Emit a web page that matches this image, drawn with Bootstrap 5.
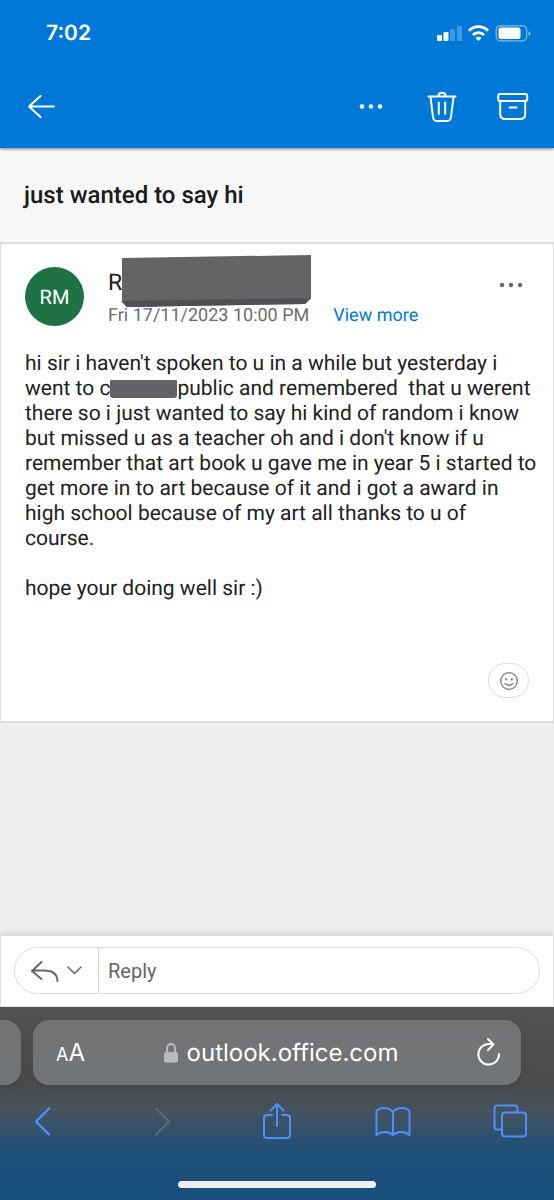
<!DOCTYPE html>
<html lang="en">
<head>
<meta charset="utf-8">
<meta name="viewport" content="width=device-width, initial-scale=1">
<title>just wanted to say hi</title>
<link href="https://cdn.jsdelivr.net/npm/bootstrap@5.3.0/dist/css/bootstrap.min.css" rel="stylesheet">
<style>
  body { font-family: Roboto, "Liberation Sans", sans-serif; color: #212121; background: #efefef; text-rendering: geometricPrecision; }
  svg { display: block; fill: none; stroke: currentColor; stroke-width: 2; stroke-linecap: round; stroke-linejoin: round; overflow: visible; }
  .icon-btn { background: none; border: 0; padding: 0; color: inherit; }
  .ios-text { font-family: Inter, "Liberation Sans", sans-serif; }

  .app-header { background: #0078d7; color: #fff; box-shadow: 0 1px 3px rgba(0,0,0,.5); z-index: 1; }
  .status-row { height: 64px; padding: 4px 24px 0 46px; }
  .clock { font-size: 21px; font-weight: 600; }
  .tool-row { height: 84px; padding: 0 25px; }
  .tool-group { gap: 39px; }

  .subject-row { background: #f7f7f7; padding: 32px 24px; }
  .subject-row h1 { font-size: 24px; line-height: 30px; font-weight: 500; color: #1b1b1b; }

  .message { border: 1px solid #dedede; border-top-width: 2px; border-bottom-width: 2px; padding: 23px 14px 23px 24px; }
  .avatar { width: 59px; height: 59px; background: #1f7244; color: #fff; font-size: 20px; }
  .sender { font-size: 23px; line-height: 31px; }
  .sent-at { font-size: 18px; line-height: 36px; color: #6b6b6b; }
  .sent-at a { color: #0078d4; }
  .name-cover { position: absolute; left: 13px; top: -13px; }
  .message-body { font-size: 21px; line-height: 25px; margin-top: 18px; white-space: pre-wrap; }
  .word-cover { display: inline-block; width: 67px; height: 18px; background: #626366; border-radius: 1px 1px 3px 3px; vertical-align: -3px; }
  .react { width: 41px; height: 35px; border: 1px solid #dadada; border-radius: 18px; color: #777; margin: 61px 10px 0 auto; }

  .reply-bar { background: #fff; border: 1px solid #dedede; border-top: 0; padding: 11px 13px 12px; box-shadow: 0 -2px 8px rgba(0,0,0,.13); }
  .reply-pill { height: 47px; border: 1px solid #dcdcdc; border-radius: 24px; color: #666; }
  .reply-kind { width: 84px; border-right: 1px solid #d4d4d4; padding: 0 16px; }
  .reply-pill input { font-size: 20px; background: none; border: 0; outline: 0; padding: 0 9px; color: #666; }
  .reply-pill input::placeholder { color: #666; opacity: 1; }

  .browser-bar { background: linear-gradient(#535353 0, #4b4b4c 78px, #46535e 104px, #1f5078 145px, #174e7c 193px); padding-top: 13px; }
  .tab-row { gap: 12px; padding-right: 33px; }
  .tab-edge, .address { height: 65px; background: linear-gradient(#737373, #717579); box-shadow: 0 2px 8px rgba(0,0,0,.12); }
  .tab-edge { width: 21px; border-radius: 0 16px 16px 0; }
  .address { border-radius: 16px; padding: 0 19px 0 23px; color: #fff; }
  .text-size { font-size: 24px; }
  .text-size small { font-size: 18px; }
  .host { font-size: 24px; }
  .nav-row { height: 72px; padding: 0 26px 0 24px; color: #4a90ff; }
  .nav-row .dimmed { color: #5d6b78; }
  .home-line { width: 198px; height: 7px; border-radius: 4px; background: #eee; margin: 24px auto 12px; }
</style>
</head>
<body>
<div class="d-flex flex-column min-vh-100">
  <header class="app-header position-relative">
    <div class="status-row d-flex align-items-center justify-content-between">
      <span class="clock ios-text">7:02</span>
      <svg width="94" height="18" viewBox="0 0 94 18" aria-hidden="true">
        <g fill="#fff" stroke="none">
          <rect x="1" y="10" width="5" height="6" rx="1"/><rect x="7.500" y="7" width="5" height="9" rx="1"/>
          <rect x="14" y="4" width="5" height="12" rx="1" opacity=".25"/><rect x="21" y="1" width="5" height="15" rx="1" opacity=".25"/>
          <rect x="62.500" y="2.500" width="22" height="11.500" rx="2.500"/>
          <path d="M92.500 6v5q2-1 2-2.500T92.500 6z" opacity=".5"/>
          <path d="M42.500 11.800q2.400 0 2.900 1.300L42.500 16l-2.900-2.900q.5-1.300 2.900-1.300z"/>
        </g>
        <path d="M33 5.800C38 .3 47 .3 52 5.800M37 9.900c3-3 8-3 11 0" stroke-width="2.800" stroke-linecap="butt"/>
        <rect x="60.200" y=".8" width="30.500" height="15" rx="4" stroke-width="1.200" opacity=".5"/>
      </svg>
    </div>
    <nav class="tool-row d-flex align-items-center justify-content-between" aria-label="Message actions">
      <button class="icon-btn" aria-label="Back"><svg width="32" height="32" viewBox="0 0 32 32"><path d="M29 16.500H4M15.500 6L4 16.500 15.500 27"/></svg></button>
      <div class="tool-group d-flex">
        <button class="icon-btn" aria-label="More"><svg width="32" height="32" viewBox="0 0 32 32"><g fill="currentColor" stroke="none"><circle cx="7" cy="16.500" r="2.300"/><circle cx="16" cy="16.500" r="2.300"/><circle cx="25" cy="16.500" r="2.300"/></g></svg></button>
        <button class="icon-btn" aria-label="Delete"><svg width="32" height="32" viewBox="0 0 32 32"><path d="M2.500 6.500h27M12.500 6c0-4.500 7-4.500 7 0M4.500 7l2.500 20q.5 4 4 4h10q3.500 0 4-4L27.500 7M12.800 12.500V24M19.200 12.500V24"/></svg></button>
        <button class="icon-btn" aria-label="Archive"><svg width="32" height="32" viewBox="0 0 32 32"><rect x="1.200" y="4" width="29" height="7" rx="2"/><path d="M3.200 11v13q0 5 5 5h15q5 0 5-5V11M12.500 17.500h7"/></svg></button>
      </div>
    </nav>
  </header>

  <section class="subject-row"><h1 class="m-0">just wanted to say hi</h1></section>

  <article class="message bg-white">
    <div class="d-flex align-items-start">
      <span class="avatar rounded-circle d-flex align-items-center justify-content-center flex-shrink-0">RM</span>
      <div class="ms-4 flex-grow-1 position-relative">
        <div class="sender">R</div>
        <div class="sent-at d-flex"><time class="me-4">Fri 17/11/2023 10:00 PM</time><a href="#" class="text-decoration-none">View more</a></div>
        <svg class="name-cover" width="192" height="54" viewBox="0 0 192 54" aria-hidden="true"><path d="M1 4L190 1v43l-6 6L6 53l-5-5z" fill="#646467" stroke="none"/><path d="M1 47l189-3-6 6L6 53z" fill="#505054" stroke="none"/><path d="M1 47.500l5 5 30-.5" stroke="#4d5080" stroke-width="1"/></svg>
      </div>
      <button class="icon-btn me-2" aria-label="More options"><svg width="32" height="36" viewBox="0 0 32 36"><g fill="#666" stroke="none"><circle cx="3" cy="18" r="2.200"/><circle cx="12" cy="18" r="2.200"/><circle cx="21" cy="18" r="2.200"/></g></svg></button>
    </div>
    <p class="message-body mb-0">hi sir i haven't spoken to u in a while but yesterday i went to c<span class="word-cover"></span>public and remembered  that u werent there so i just wanted to say hi kind of random i know but missed u as a teacher oh and i don't know if u remember that art book u gave me in year 5 i started to get more in to art because of it and i got a award in high school because of my art all thanks to u of course.

hope your doing well sir :)</p>
    <button class="icon-btn react d-flex align-items-center justify-content-center" aria-label="React"><svg width="18" height="18" viewBox="0 0 18 18"><circle cx="9" cy="9" r="8.300" stroke-width="1.300"/><path d="M5 11.500q4 3.500 8 0" stroke-width="1.300"/><g fill="currentColor" stroke="none"><circle cx="6.200" cy="7.300" r="1.100"/><circle cx="11.800" cy="7.300" r="1.100"/></g></svg></button>
  </article>

  <div class="flex-grow-1"></div>

  <form class="reply-bar">
    <div class="reply-pill d-flex">
      <button type="button" class="icon-btn reply-kind d-flex align-items-center gap-2 flex-shrink-0" aria-label="Reply type">
        <svg width="28" height="22" viewBox="0 0 28 22"><path d="M10.500 2L1 11l9.500 8M1 10.500h12q13 0 13.500 10.500"/></svg>
        <svg width="15" height="9" viewBox="0 0 15 9"><path d="M1 1l6.500 6.500L14 1" stroke-width="1.500"/></svg>
      </button>
      <input class="flex-grow-1 w-100" type="text" placeholder="Reply" aria-label="Reply">
    </div>
  </form>

  <footer class="browser-bar ios-text">
    <div class="tab-row d-flex">
      <div class="tab-edge flex-shrink-0"></div>
      <div class="address d-flex align-items-center justify-content-between flex-grow-1">
        <button class="icon-btn text-size" aria-label="Text size"><small>A</small>A</button>
        <span class="host d-flex align-items-center gap-2"><svg width="16" height="20" viewBox="0 0 16 20" aria-hidden="true"><g color="#b9b9c0"><rect x="1" y="9" width="14" height="10.500" rx="2" fill="currentColor" stroke="none"/><path d="M4 9V5.500C4-.5 12-.5 12 5.500V9" stroke="currentColor"/></g></svg>outlook.office.com</span>
        <button class="icon-btn" aria-label="Reload"><svg width="26" height="30" viewBox="0 0 26 30"><path d="M23 16A10.300 10.300 0 1 1 12.700 6H17M12 1l5.500 5.500L12 12"/></svg></button>
      </div>
    </div>
    <nav class="nav-row d-flex align-items-center justify-content-between" aria-label="Browser">
      <button class="icon-btn" aria-label="Previous page"><svg width="36" height="36" viewBox="0 0 36 36"><path d="M25 5.500L12 18.500l13 13" stroke-width="2.400"/></svg></button>
      <button class="icon-btn dimmed" aria-label="Next page" disabled><svg width="36" height="36" viewBox="0 0 36 36"><path d="M15 5.500l13 13-13 13"/></svg></button>
      <button class="icon-btn" aria-label="Share"><svg width="36" height="36" viewBox="0 0 36 36"><path d="M14 12H9q-3 0-3 3v17q0 3 3 3h20q3 0 3-3V15q0-3-3-3h-5M19 23V1M12.500 7.500L19 1l6.500 6.500"/></svg></button>
      <button class="icon-btn" aria-label="Bookmarks"><svg width="36" height="36" viewBox="0 0 36 36"><path d="M18 9C14.500 4 5 3.500 1.500 8v24c4.500-4 12.500-4 16.500 0 4-4 12-4 16.500 0V8C31 3.500 21.500 4 18 9zM18 9v23"/></svg></button>
      <button class="icon-btn" aria-label="Tabs"><svg width="36" height="36" viewBox="0 0 36 36"><path d="M10 26.500H5.500q-3 0-3-3v-18q0-3 3-3h17q3 0 3 3V9"/><rect x="10" y="9.500" width="24" height="24" rx="3"/></svg></button>
    </nav>
    <div class="home-line"></div>
  </footer>
</div>
<script src="https://cdn.jsdelivr.net/npm/bootstrap@5.3.0/dist/js/bootstrap.bundle.min.js"></script>
</body>
</html>
